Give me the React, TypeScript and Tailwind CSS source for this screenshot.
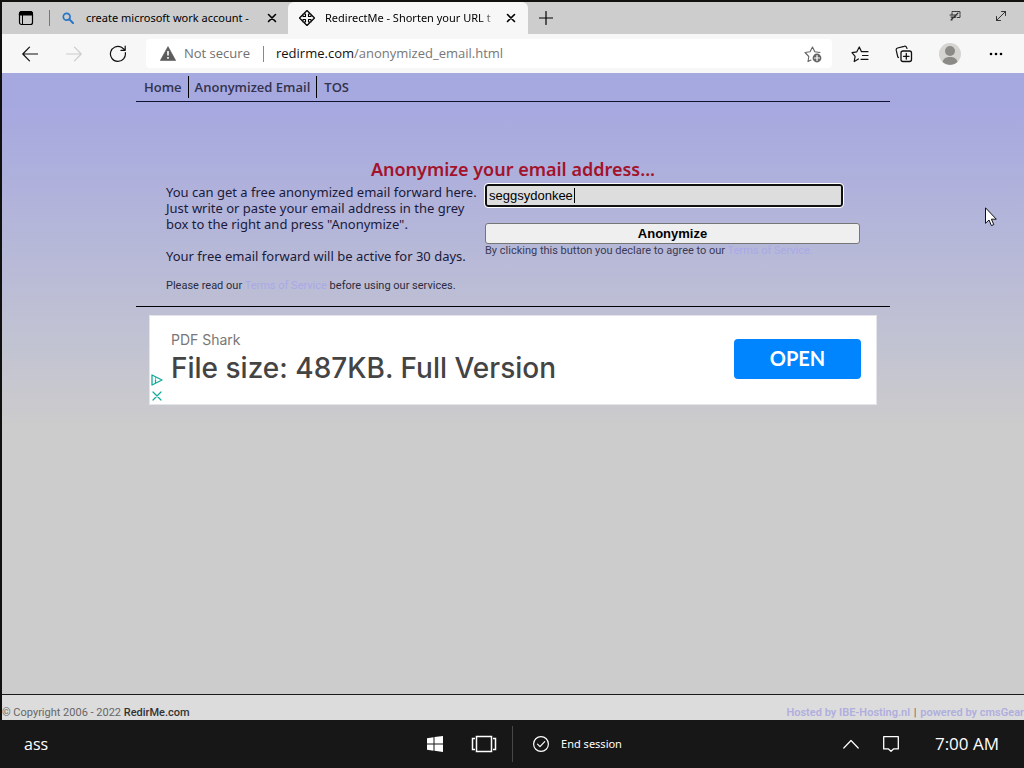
import type { ReactNode } from "react";

const strokeProps = {
  fill: "none",
  stroke: "currentColor",
  strokeLinecap: "round",
  strokeLinejoin: "round",
} as const;

function Glyph({ className, width = 20, height = 20, children }: { className?: string; width?: number; height?: number; children: ReactNode }) {
  return (
    <svg className={className} width={width} height={height} viewBox={`0 0 ${width} ${height}`} aria-hidden="true" {...strokeProps}>
      {children}
    </svg>
  );
}

function TabClose({ label }: { label: string }) {
  return (
    <button type="button" aria-label={label} className="shrink-0">
      <Glyph width={10} height={10}>
        <path d="M1.500 1.500l7 7M8.500 1.500l-7 7" strokeWidth="1.6" />
      </Glyph>
    </button>
  );
}

function TabStrip() {
  return (
    <div className="flex h-8 items-stretch bg-[#cdcdcd] text-black">
      <button type="button" aria-label="Tab actions" className="flex w-[47px] items-center justify-center">
        <Glyph width={16} height={16}>
          <rect x="1.5" y="1.5" width="13" height="13" rx="2" strokeWidth="1.2" />
          <path d="M1.5 3.5a2 2 0 0 1 2-2h9a2 2 0 0 1 2 2V5h-13z" fill="currentColor" strokeWidth="1" />
          <path d="M4.5 5v9" strokeWidth="1" />
        </Glyph>
      </button>
      <div className="my-2 w-px bg-[#777]" />
      <div className="flex w-[238px] items-center px-3 pr-[11px]">
        <Glyph width={12} height={12} className="shrink-0 text-[#2a74c5]">
          <circle cx="4.7" cy="4.7" r="3.4" strokeWidth="1.7" />
          <path d="M7.4 7.4l3.600 3.600" strokeWidth="2" />
        </Glyph>
        <span className="ml-3 flex-1 font-['Noto_Sans',sans-serif] text-[11px] whitespace-nowrap">create microsoft work account -</span>
        <TabClose label="Close search tab" />
      </div>
      <div className="flex w-60 items-center rounded-t-md bg-[#f7f7f7] pr-3 pl-[11px]">
        <Glyph width={16} height={16} className="shrink-0">
          <path d="M8 .5l3 3M8 .5l-3 3M8 15.500l3-3M8 15.500l-3-3M.5 8l3-3M.5 8l3 3M15.500 8l-3-3M15.500 8l-3 3" strokeWidth="1.200" />
          <path d="M4 4h2.500v2.500H4zM9.500 4H12v2.500H9.500zM4 9.500h2.500V12H4zM9.500 9.500H12V12H9.500z" strokeWidth="1.100" />
        </Glyph>
        <span className="ml-[10px] flex-1 bg-linear-to-r from-black from-90% to-[#dddddd] to-98% bg-clip-text font-['Noto_Sans',sans-serif] text-[11px] whitespace-nowrap text-transparent">
          RedirectMe - Shorten your URL t
        </span>
        <div className="ml-2 flex">
          <TabClose label="Close RedirectMe tab" />
        </div>
      </div>
      <button type="button" aria-label="New tab" className="flex w-9 items-center justify-center">
        <Glyph width={14} height={14}>
          <path d="M7 .5v13M.5 7h13" strokeWidth="1.2" />
        </Glyph>
      </button>
      <div className="ml-auto flex items-center gap-[34px] pr-[17px] pb-1 text-[#333]">
        <button type="button" aria-label="Disconnect">
          <Glyph width={12} height={12}>
            <path d="M3 5V1.500h8v6H8" strokeWidth="1" strokeDasharray="2 1" />
            <path d="M1 5h7M2 7h5M2 10l7-7M3 10V7.500h3" strokeWidth="1.100" />
          </Glyph>
        </button>
        <button type="button" aria-label="Expand window">
          <Glyph width={12} height={12}>
            <path d="M1.500 10.500l9-9M6.500 1.500h4v4M1.500 6.500v4h4" strokeWidth="1" />
          </Glyph>
        </button>
      </div>
    </div>
  );
}

function Toolbar() {
  return (
    <div className="flex h-[39px] items-center bg-[#f7f7f7] pr-[21px] pl-5 text-[#111]">
      <button type="button" aria-label="Back">
        <Glyph width={16} height={16}>
          <path d="M15.500 8H.8M7.500 1.200L.8 8l6.700 6.800" strokeWidth="1.200" />
        </Glyph>
      </button>
      <button type="button" aria-label="Forward" disabled className="ml-7 text-[#ccc]">
        <Glyph width={16} height={16}>
          <path d="M.5 8h14.700M8.500 1.200L15.200 8l-6.700 6.800" strokeWidth="1.200" />
        </Glyph>
      </button>
      <button type="button" aria-label="Refresh" className="ml-[27px]">
        <Glyph width={18} height={18}>
          <path d="M16.300 7.500A7.500 7.500 0 1 1 12.500 2.300L16 5M16.200 1v4.300h-4.300" strokeWidth="1.200" />
        </Glyph>
      </button>
      <div className="ml-[19px] flex h-[29px] flex-1 items-center rounded bg-white pr-[10px] pl-[14px]">
        <svg width="16" height="15" viewBox="0 0 16 15" aria-hidden="true">
          <path d="M8 .5L15.700 14.500H.3z" fill="#5c5c5c" stroke="#5c5c5c" strokeLinejoin="round" strokeWidth=".6" />
          <path d="M8 5v4.500M8 11v1.700" stroke="#fff" strokeWidth="1.600" />
        </svg>
        <span className="ml-2 w-[71px] text-[13px] whitespace-nowrap text-[#707070]">Not secure</span>
        <span className="ml-2 h-4 w-px bg-[#888]" />
        <a href="#address" className="ml-3 flex-1 text-[13px] whitespace-nowrap text-[#777]">
          <span className="text-[#111]">redirme.com</span>/anonymized_email.html
        </a>
        <button type="button" aria-label="Add to favorites" className="text-[#666]">
          <Glyph width={18} height={18}>
            <path d="M7 15l-3 1.500.8-5L1 7.500l5-.8L8.500 2l2.300 4.700 5.200.8" strokeWidth="1.100" />
            <circle cx="13" cy="13" r="4.400" fill="#666" stroke="none" />
            <path d="M13 10.500v5M10.500 13h5" stroke="#fff" strokeWidth="1.200" />
          </Glyph>
        </button>
      </div>
      <button type="button" aria-label="Favorites" className="ml-[19px]">
        <Glyph width={18} height={18}>
          <path d="M7.500 14l-4.300 2.500.9-5.100L1 7.700l4.800-.9L8.300 2l2.200 4.700H17M11.500 10.500H17M10 14.300h7" strokeWidth="1.200" />
        </Glyph>
      </button>
      <button type="button" aria-label="Collections" className="ml-[26px]">
        <Glyph width={18} height={18}>
          <path d="M3.500 12.500L2.800 12 1.200 5.200A2 2 0 0 1 2.600 3l6.500-1.700A2 2 0 0 1 11.600 2.500l.4 1" strokeWidth="1.200" />
          <rect x="6" y="6" width="10.500" height="10.500" rx="2" strokeWidth="1.300" />
          <path d="M11.300 8.500v5.500M8.500 11.300H14" strokeWidth="1.300" />
        </Glyph>
      </button>
      <button type="button" aria-label="Profile" className="ml-[26px]">
        <svg width="22" height="22" viewBox="0 0 22 22" aria-hidden="true">
          <circle cx="11" cy="11" r="11" fill="#d5d4d1" />
          <circle cx="11" cy="8" r="5" fill="#8b8a87" />
          <path d="M3.500 19c1-4 4-5 7.500-5s6.500 1 7.500 5a11 11 0 0 1-15 0z" fill="#8b8a87" />
        </svg>
      </button>
      <button type="button" aria-label="Settings and more" className="ml-7">
        <svg width="14" height="4" viewBox="0 0 14 4" aria-hidden="true">
          <circle cx="2" cy="2" r="1.300" />
          <circle cx="7" cy="2" r="1.300" />
          <circle cx="12" cy="2" r="1.300" />
        </svg>
      </button>
    </div>
  );
}

function SiteNav() {
  return (
    <nav className="flex h-[29px] items-start border-b border-[#111133] pt-[3px] font-['Open_Sans',sans-serif] text-[13px] leading-[22px] font-semibold text-[#33334d]">
      <a href="#home" className="border-r border-black pr-[6px] pl-2">Home</a>
      <a href="#email" className="border-r border-black px-[6px]">Anonymized Email</a>
      <a href="#tos" className="px-[7px]">TOS</a>
    </nav>
  );
}

function EmailForm() {
  return (
    <section className="border-b border-black px-[30px] pt-[55px] pb-3">
      <h1 className="text-center text-[18px] leading-6 font-semibold text-[#a3132c]">Anonymize your email address...</h1>
      <div className="flex pt-[2px]">
        <div className="w-[319px] shrink-0 text-[13px] leading-4 text-[#1a1a3a]">
          <div className="pt-px">
            <p>
              You can get a free anonymized email forward here.
              <br />
              Just write or paste your email address in the grey
              <br />
              box to the right and press "Anonymize".
            </p>
            <p className="mt-4">Your free email forward will be active for 30 days.</p>
          </div>
          <p className="mt-[14px] font-['Roboto',sans-serif] text-[11px] whitespace-nowrap text-[#2b2b3f]">
            Please read our <a href="#tos" className="text-[#a9a9e6]">Terms of Service</a> before using our services.
          </p>
        </div>
        <form className="flex-1 pt-px" onSubmit={(event) => event.preventDefault()}>
          <div className="relative mr-[17px]">
            <input
              type="text"
              aria-label="Email address"
              defaultValue="seggsydonkee"
              className="block h-[23px] w-full rounded-[3px] border-2 border-[#101010] bg-[#dcdddc] px-[2px] font-['Liberation_Sans'] text-[13px] text-black outline outline-white"
            />
            <span className="absolute top-1 left-[89px] h-[15px] w-px bg-black" />
          </div>
          <button type="submit" className="mt-4 block h-[21px] w-full rounded-[3px] border border-[#767676] bg-[#efefef] font-['Liberation_Sans'] text-[13px] leading-[19px] font-bold text-black">
            Anonymize
          </button>
          <p className="font-['Roboto',sans-serif] text-[11px] leading-[14px] whitespace-nowrap text-[#3a3a55]">
            By clicking this button you declare to agree to our <a href="#tos" className="text-[#a9a9e6]">Terms of Service.</a>
          </p>
        </form>
      </div>
    </section>
  );
}

function AdBanner() {
  return (
    <aside className="mx-auto mt-2 flex h-[90px] w-full max-w-[728px] items-center border border-[#e4e4ea] bg-white pr-[15px] pb-[2px] font-['Lato',sans-serif]">
      <div className="flex w-[21px] flex-col items-start gap-1 self-end pl-px text-[#12a99c]">
        <button type="button" aria-label="Ad choices">
          <Glyph width={12} height={12}>
            <path d="M1 1l10 5-10 5z" strokeWidth="1.300" />
            <path d="M4.500 4v.2M4.500 6v2.500" strokeWidth="1.300" />
          </Glyph>
        </button>
        <button type="button" aria-label="Close ad">
          <Glyph width={12} height={12}>
            <path d="M2 2l8 8M10 2l-8 8" strokeWidth="1.200" />
          </Glyph>
        </button>
      </div>
      <div className="flex-1 font-['Inter',sans-serif] whitespace-nowrap">
        <p className="text-[14px] leading-[18px] text-[#777]">PDF Shark</p>
        <p className="text-[28px] leading-[38px] font-medium text-[#444]">File size: 487KB. Full Version</p>
      </div>
      <button type="button" className="h-10 w-[127px] rounded bg-[#0085ff] pb-[2px] text-[20px] font-bold text-white">OPEN</button>
    </aside>
  );
}

function SiteFooter() {
  return (
    <footer className="flex h-[26px] justify-between border-t border-[#1a1a1a] bg-[#dcdcdc] pt-[10px] font-['Roboto',sans-serif] text-[11px] leading-4 whitespace-nowrap text-[#666]">
      <p>
        © Copyright 2006 - 2022 <a href="#home" className="font-medium text-[#333]">RedirMe.com</a>
      </p>
      <p>
        <a href="#host" className="font-semibold text-[#b0aede]">Hosted by IBE-Hosting.nl</a>
        <span className="mx-px"> | </span>
        <a href="#cms" className="font-semibold text-[#b0aede]">powered by cmsGear</a>
      </p>
    </footer>
  );
}

function Taskbar() {
  return (
    <div className="flex h-12 items-center bg-[#171717] pr-[25px] pl-6 text-white">
      <span className="flex-1 text-[16px]">ass</span>
      <button type="button" aria-label="Start" className="ml-[26px]">
        <svg width="16" height="16" viewBox="0 0 16 16" fill="currentColor" aria-hidden="true">
          <path d="M0 2.200l6.500-.9v6.200H0zM7.500 1.100L16 0v7.500H7.500zM0 8.500h6.500v6.200L0 13.800zM7.500 8.500H16V16l-8.500-1.200z" />
        </svg>
      </button>
      <button type="button" aria-label="Task view" className="ml-7">
        <svg width="26" height="18" viewBox="0 0 26 18" fill="none" stroke="currentColor" strokeWidth="1.500" aria-hidden="true">
          <rect x="5.500" y="1.500" width="15" height="15" />
          <path d="M4 3.500H1.500v11H4M22 3.500h2.500v11H22" />
        </svg>
      </button>
      <div className="ml-[15px] h-9 w-px bg-[#484848]" />
      <button type="button" className="ml-5 flex items-center gap-3 font-['Noto_Sans',sans-serif] text-[11px]">
        <Glyph width={16} height={16}>
          <circle cx="8" cy="8" r="7.400" strokeWidth="1.200" />
          <path d="M4.500 8.200l2.500 2.500 4.700-5" strokeWidth="1.200" />
        </Glyph>
        End session
      </button>
      <div className="flex flex-1 items-center justify-end">
        <button type="button" aria-label="Show hidden icons">
          <Glyph width={16} height={10}>
            <path d="M.8 9L8 1.500 15.200 9" strokeWidth="1.200" />
          </Glyph>
        </button>
        <button type="button" aria-label="Notifications" className="ml-6">
          <Glyph width={16} height={16}>
            <path d="M.7.700h14.600v12.200H10.500L8 15.200l-2.500-2.300H.7z" strokeWidth="1.300" />
          </Glyph>
        </button>
        <time className="ml-9 text-[17px]">7:00 AM</time>
      </div>
    </div>
  );
}

export default function App() {
  return (
    <div className="relative flex min-h-screen flex-col bg-[#10100e] pt-[2px] font-['Open_Sans',sans-serif]">
      <div className="flex flex-1 flex-col pl-[2px]">
        <TabStrip />
        <Toolbar />
        <main className="flex flex-1 flex-col bg-[#cccccc] bg-linear-to-b from-[#a6a8e0] from-5% to-[#cccccc] to-55% font-['Noto_Sans',sans-serif]">
          <div className="mx-auto w-full max-w-[754px] flex-1">
            <SiteNav />
            <EmailForm />
            <AdBanner />
          </div>
          <SiteFooter />
        </main>
      </div>
      <Taskbar />
      <svg className="pointer-events-none absolute top-[207px] left-[985px]" width="12" height="20" viewBox="0 0 12 20" aria-hidden="true">
        <path d="M.5.800v15.500l3.500-3.300 2.400 5.600 2.400-1-2.400-5.400h4.900z" fill="#fff" stroke="#111" />
      </svg>
    </div>
  );
}
